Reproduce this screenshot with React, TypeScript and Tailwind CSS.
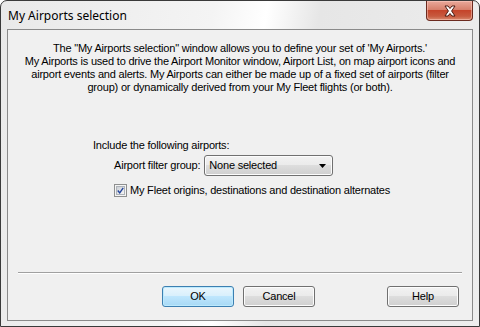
import React from "react";

const ui = { fontFamily: '"Liberation Sans", Arial, sans-serif', letterSpacing: "-0.2px" };

function Button({ label, def }: { label: string; def?: boolean }) {
  return (
    <div
      className={
        "w-[72px] h-[21px] rounded-[3px] border flex items-center justify-center text-[11px] text-black " +
        (def
          ? "border-[#3c7fb1] bg-[linear-gradient(#eaf6fd_0%,#d9f0fc_45%,#bee6fd_50%,#a7d9f5_100%)] shadow-[inset_0_0_0_1px_#bdeafd]"
          : "border-[#707070] bg-[linear-gradient(#f2f2f2_0%,#ebebeb_45%,#dddddd_50%,#cfcfcf_100%)] shadow-[inset_0_0_0_1px_#fcfcfc]")
      }
      style={ui}
    >
      {label}
    </div>
  );
}

export default function App() {
  return (
    <div className="w-[480px] h-[327px] overflow-hidden bg-white">
      <div className="w-[480px] h-[327px] rounded-t-[7px] border border-[#3a3a3a] bg-[linear-gradient(100deg,#e9e9e9_0%,#f4f4f4_40%,#ffffff_50%,#e6e6e6_60%,#eeeeee_100%)] flex flex-col">
        <div className="h-[28px] flex items-start justify-between shrink-0">
          <div
            className="pl-[7px] pt-[7px] text-[12px] text-black leading-[16px]"
            style={{ fontFamily: '"Noto Sans", "Open Sans", sans-serif' }}
          >
            My Airports selection
          </div>
          <div className="mr-[6px] w-[47px] h-[20px] rounded-b-[4px] border border-t-0 border-[#6b2a1f] bg-[linear-gradient(#e9a99b_0%,#d7806c_45%,#c5442a_50%,#c75a3f_80%,#d98a6e_100%)] flex items-center justify-center shadow-[inset_0_0_0_1px_rgba(255,210,200,0.5)]">
            <svg width="14" height="12" viewBox="0 0 14 12">
              <path
                d="M2 1 L5 1 L7 3.5 L9 1 L12 1 L8.6 6 L12 11 L9 11 L7 8.5 L5 11 L2 11 L5.4 6 Z"
                fill="#ffffff"
                stroke="#4b1b12"
                strokeWidth="1"
                strokeLinejoin="round"
              />
            </svg>
          </div>
        </div>
        <div className="mx-[6px] h-[292px] border border-[#8a8a8a] bg-[#f0f0f0] flex flex-col">
          <div
            className="pt-[12px] text-center text-[11px] leading-[13px] text-black"
            style={ui}
          >
            <div>The "My Airports selection" window allows you to define your set of 'My Airports.'</div>
            <div>My Airports is used to drive the Airport Monitor window, Airport List, on map airport icons and</div>
            <div>airport events and alerts. My Airports can either be made up of a fixed set of airports (filter</div>
            <div>group) or dynamically derived from your My Fleet flights (or both).</div>
          </div>
          <div className="pl-[85px] pt-[45px] text-[11px] text-black" style={ui}>
            <div className="leading-[13px]">Include the following airports:</div>
            <div className="pl-[21px] pt-[3px] flex items-center gap-[4px]">
              <span>Airport filter group:</span>
              <div className="w-[129px] h-[21px] rounded-[3px] border border-[#707070] bg-[linear-gradient(#f2f2f2_0%,#ebebeb_45%,#dddddd_50%,#cfcfcf_100%)] shadow-[inset_0_0_0_1px_#fcfcfc] flex items-center justify-between pl-[4px] pr-[6px]">
                <span>None selected</span>
                <svg width="7" height="4" viewBox="0 0 7 4">
                  <path d="M0 0 H7 L3.5 4 Z" fill="#000" />
                </svg>
              </div>
            </div>
            <div className="pl-[21px] pt-[6px] flex items-center gap-[3px]">
              <div className="w-[13px] h-[13px] border border-[#8e8f8f] bg-[#f4f4f4] p-[1px]">
                <div className="w-full h-full border border-[#aeb3b9] bg-[linear-gradient(135deg,#cbcfd5,#f6f6f6)] flex items-center justify-center">
                  <svg width="9" height="9" viewBox="0 0 9 9">
                    <path d="M1 4.5 L3.5 7.5 L8 1" fill="none" stroke="#21439b" strokeWidth="1.8" />
                  </svg>
                </div>
              </div>
              <span>My Fleet origins, destinations and destination alternates</span>
            </div>
          </div>
          <div className="flex-1" />
          <div className="mx-[10px] h-[2px] border-t border-[#a0a0a0] border-b border-b-white" />
          <div className="pt-[12px] pb-[13px] flex pl-[154px]">
            <Button label="OK" def />
            <div className="w-[9px]" />
            <Button label="Cancel" />
            <div className="w-[72px]" />
            <Button label="Help" />
          </div>
        </div>
      </div>
    </div>
  );
}
